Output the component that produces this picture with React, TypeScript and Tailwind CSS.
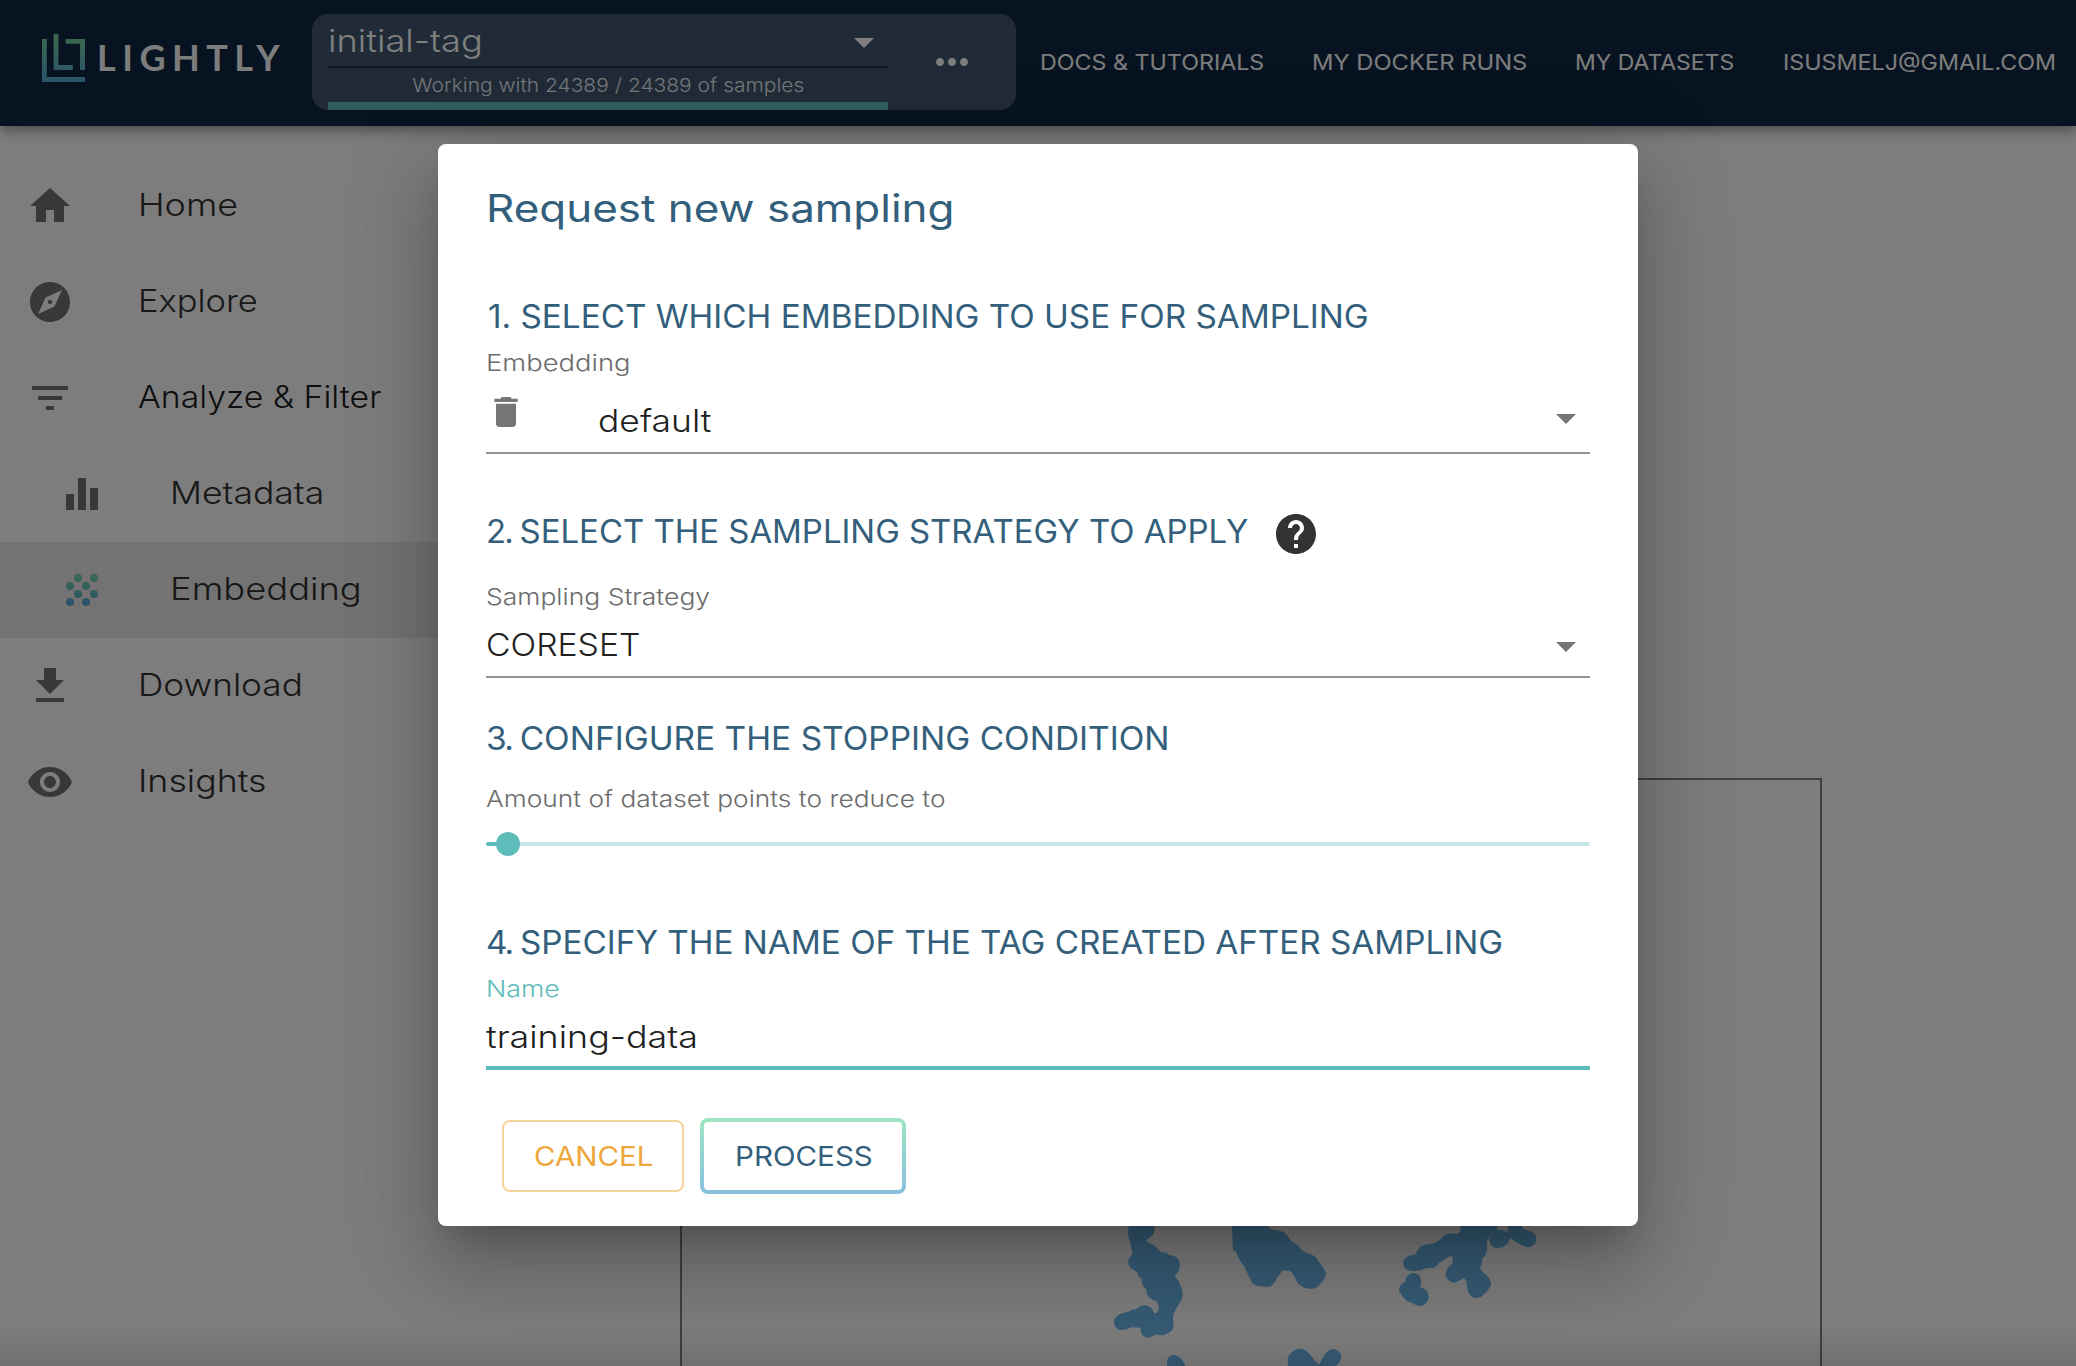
import React from 'react';
import {
  MdHome,
  MdExplore,
  MdFilterList,
  MdEqualizer,
  MdGetApp,
  MdVisibility,
  MdDelete,
  MdHelp,
  MdArrowDropDown,
  MdMoreHoriz,
} from 'react-icons/md';

function Logo() {
  return (
    <div className="flex h-[126px] w-[270px] shrink-0 items-start pl-[42px]">
      <svg width="43" height="48" viewBox="0 0 43 48" className="mt-[34px] shrink-0">
        <defs>
          <linearGradient id="logo" x1="0" y1="0" x2="0" y2="48" gradientUnits="userSpaceOnUse">
            <stop offset="0.1" stopColor="#74cf9c" />
            <stop offset="1" stopColor="#54a8d4" />
          </linearGradient>
        </defs>
        <g fill="url(#logo)">
          <path d="M0 5h4.8v38H43v5H0z" />
          <path d="M11.6 0h4.9v31h14.4v5H11.6z" />
          <path d="M23.6 5H43v31h-5V9.8H23.6z" />
        </g>
      </svg>
      <span className="ml-[12px] mt-[33px] font-['Lato',sans-serif] text-[36px] font-bold leading-[48px] tracking-[6.5px] text-[#f8f8f8]">
        LIGHTLY
      </span>
    </div>
  );
}

function Header() {
  return (
    <header className="relative z-10 flex h-[126px] items-start bg-[#0e2640] text-white shadow-[0_4px_8px_-2px_rgba(0,0,0,0.2),0_8px_10px_0_rgba(0,0,0,0.14),0_2px_20px_0_rgba(0,0,0,0.12)]">
      <Logo />
      <div className="ml-[42px] mt-[14px] flex h-[96px] w-[704px] shrink-0 items-start overflow-hidden rounded-[16px] bg-[#40566e] pl-4">
        <div className="flex w-[560px] flex-col">
          <div className="flex h-[54px] items-start justify-between border-b-2 border-[#26323f]">
            <span className="mt-[2px] inline-block origin-left scale-x-[1.167] text-[31px] font-light leading-[50px]">initial-tag</span>
            <MdArrowDropDown className="mt-1 size-12" />
          </div>
          <div className="flex h-[34px] items-center justify-center whitespace-nowrap text-[#e6eaee]">
            <span className="inline-block scale-x-[1.087] text-[19.3px] font-light">Working with 24389 / 24389 of samples</span>
          </div>
          <div className="h-2 bg-[#5ebdb8]" />
        </div>
        <MdMoreHoriz className="ml-10 mt-6 size-12" />
      </div>
      <nav className="ml-6 mt-[46px] flex whitespace-nowrap text-[22px] font-normal leading-8 text-[#fafafa]">
        <a className="w-[272px]"><span className="inline-block origin-left scale-x-[1.057]">DOCS &amp; TUTORIALS</span></a>
        <a className="w-[263px]"><span className="inline-block origin-left scale-x-[1.08]">MY DOCKER RUNS</span></a>
        <a className="w-[208px]"><span className="inline-block origin-left scale-x-[1.043]">MY DATASETS</span></a>
        <a><span className="inline-block origin-left scale-x-[1.059]">ISUSMELJ@GMAIL.COM</span></a>
      </nav>
    </header>
  );
}

function GrainIcon() {
  const dots = [[10, 6], [18, 6], [6, 10], [14, 10], [10, 14], [18, 14], [6, 18], [14, 18]];
  return (
    <svg viewBox="0 0 24 24" className="size-12">
      <defs>
        <linearGradient id="grain" x1="0" y1="4" x2="0" y2="20" gradientUnits="userSpaceOnUse">
          <stop offset="0.1" stopColor="#74cfa0" />
          <stop offset="0.9" stopColor="#54a8d4" />
        </linearGradient>
      </defs>
      <g fill="url(#grain)">
        {dots.map(([x, y]) => (
          <circle key={`${x}-${y}`} cx={x} cy={y} r="2" />
        ))}
      </g>
    </svg>
  );
}

const items = [
  { label: 'Home', icon: <MdHome className="size-12" />, scale: 'scale-x-[1.16]' },
  { label: 'Explore', icon: <MdExplore className="size-12" />, scale: 'scale-x-[1.112]' },
  { label: 'Analyze & Filter', icon: <MdFilterList className="size-12" />, scale: 'scale-x-[1.09]', strong: true },
  { label: 'Metadata', icon: <MdEqualizer className="size-12" />, scale: 'scale-x-[1.146]', nested: true },
  { label: 'Embedding', icon: <GrainIcon />, scale: 'scale-x-[1.172]', nested: true, active: true },
  { label: 'Download', icon: <MdGetApp className="size-12" />, scale: 'scale-x-[1.135]' },
  { label: 'Insights', icon: <MdVisibility className="size-12" />, scale: 'scale-x-[1.152]' },
];

function Sidebar() {
  return (
    <aside className="w-[480px] shrink-0 pt-8">
      {items.map((it) => (
        <div
          key={it.label}
          className={`flex h-24 items-center ${it.nested ? 'pl-[58px]' : 'pl-[26px]'} ${it.active ? 'bg-[#e6e6e6]' : ''}`}
        >
          <span className="text-[#717171]">{it.icon}</span>
          <span
            className={`ml-16 inline-block origin-left whitespace-nowrap pb-px text-[31px] font-light ${it.scale} ${it.strong ? 'text-[#1c1c1c]' : 'text-[#303030]'}`}
          >
            {it.label}
          </span>
        </div>
      ))}
    </aside>
  );
}

function Plot() {
  return (
    <main className="flex-1 pl-[200px] pt-[652px]">
      <div className="relative h-[700px] w-[1142px] border-2 border-[#808080]">
        <svg
          width="560"
          height="186"
          viewBox="0 0 1568 558"
          preserveAspectRatio="none"
          className="absolute left-[378px] top-[400px]"
          fill="#6cb6ea"
        >
          <path d="M200 120C188 140 188 165 195 180L203 222Q190 232 191 250Q194 266 216 276Q217 290 229 296Q228 318 242 328Q240 356 270 363Q278 375 276 386Q273 402 264 400Q258 378 236 375Q222 378 214 387Q200 388 190 396Q151 402 151 428Q154 450 174 450Q190 448 200 442L225 443Q226 472 248 473Q262 470 268 463Q290 470 302 460Q320 450 318 432Q314 420 319 400Q330 376 341 358Q347 338 338 318Q332 300 321 288Q336 276 336 252Q334 228 306 225Q296 214 282 216Q264 192 244 186Q242 180 246 177Q266 166 265 145L262 120Z" />
          <path d="M481 120L484 208Q487 214 494 217Q500 242 518 262Q526 286 537 306Q544 318 560 319Q576 322 590 319Q600 312 606 296Q618 282 623 271L645 273Q656 284 662 304Q674 325 702 327Q722 326 728 312Q742 298 745 280Q738 262 726 247Q718 226 692 219Q680 212 672 206Q664 192 648 184Q638 168 627 157Q612 148 596 149Q580 142 576 120Z" />
          <path d="M1121 130L1121 156L1110 163Q1090 154 1074 168Q1064 184 1040 192Q1006 190 994 224Q964 226 960 250Q964 272 984 273Q1002 274 1012 271Q1020 263 1044 264Q1056 260 1060 250Q1080 234 1096 227Q1103 236 1098 251Q1080 264 1080 286Q1084 306 1104 308Q1122 302 1130 294Q1139 296 1140 322Q1144 352 1164 354Q1178 354 1184 346Q1204 328 1207 312Q1204 290 1186 278Q1178 270 1176 264Q1184 250 1182 236Q1195 226 1196 208Q1194 180 1200 176Q1206 160 1222 152L1228 130Z" />
          <path d="M1256 125L1252 156Q1238 148 1226 150Q1202 160 1201 180Q1206 204 1228 205Q1254 202 1260 174Q1280 190 1288 192Q1300 202 1314 202Q1334 196 1334 174Q1330 152 1304 150Q1292 146 1292 125Z" />
          <path d="M990 278Q968 282 966 305Q948 316 949 332Q956 348 970 362Q980 368 988 369Q996 378 1010 378Q1030 374 1033 350Q1030 326 1008 322Q1014 306 1010 294Q1004 280 990 278Z" />
          <path d="M300 558V540Q306 525 322 525Q342 532 351 558Z" />
          <path d="M638 558V532Q650 506 674 506Q694 510 700 524Q710 534 712 542Q722 544 723 556Q730 548 734 536Q748 506 768 507Q788 514 788 534Q782 552 771 558Z" />
        </svg>
      </div>
    </main>
  );
}

function Caret({ className }: { className: string }) {
  return <MdArrowDropDown className={`ml-auto size-12 text-[#757575] ${className}`} />;
}

function Dialog() {
  return (
    <div className="flex h-[1082px] w-[1200px] flex-col rounded-lg bg-white px-12 pb-8 pt-8 text-[#212121] shadow-[0_22px_30px_-14px_rgba(0,0,0,0.2),0_48px_76px_6px_rgba(0,0,0,0.14),0_18px_92px_16px_rgba(0,0,0,0.12)]">
      <h1 className="h-16 text-[38.5px] font-normal leading-[64px] text-[#335f7c]">
        <span className="inline-block origin-left scale-x-[1.142]">Request new sampling</span>
      </h1>

      <h2 className="mt-[53px] h-12 whitespace-nowrap pl-[2px] text-[32px] font-normal leading-[48px] text-[#335f7c]">
        <span className="inline-block origin-left scale-x-[1.04]">1. SELECT WHICH EMBEDDING TO USE FOR SAMPLING</span>
      </h2>
      <label className="mt-[6px] h-8 text-[23.2px] font-light leading-8 text-[#6c6c6c]">
        <span className="inline-block origin-left scale-x-[1.181]">Embedding</span>
      </label>
      <div className="-mt-px flex h-[76px] items-start border-b-2 border-[#949494]">
        <MdDelete className="mt-[14px] size-10 text-[#757575]" />
        <span className="ml-[72px] mt-[23px] inline-block origin-left scale-x-[1.144] text-[31px] font-light leading-10">default</span>
        <Caret className="mt-4" />
      </div>

      <div className="mt-14 flex h-12 items-center">
        <h2 className="w-[786px] whitespace-nowrap pb-[5px] text-[32px] font-normal leading-[43px] text-[#335f7c]">
          <span className="inline-block origin-left scale-x-[1.029]">
            <span className="tracking-[-1.7px]">2. </span>SELECT THE SAMPLING STRATEGY TO APPLY
          </span>
        </h2>
        <MdHelp className="size-12 text-[#333333]" />
      </div>
      <label className="mt-[23px] h-8 text-[23.2px] font-light leading-8 text-[#6c6c6c]">
        <span className="inline-block origin-left scale-x-[1.142]">Sampling Strategy</span>
      </label>
      <div className="flex h-[65px] items-start border-b-2 border-[#949494]">
        <span className="mt-3 inline-block origin-left scale-x-[1.088] text-[31px] font-light leading-10">CORESET</span>
        <Caret className="mt-[9px]" />
      </div>

      <h2 className="mt-[37px] h-12 whitespace-nowrap text-[32px] font-normal leading-[48px] text-[#335f7c]">
        <span className="inline-block origin-left scale-x-[1.046]">
          <span className="tracking-[-1.7px]">3. </span>CONFIGURE THE STOPPING CONDITION
        </span>
      </h2>
      <label className="mt-5 h-8 text-[23.2px] font-light leading-8 text-[#6c6c6c]">
        <span className="inline-block origin-left scale-x-[1.134]">Amount of dataset points to reduce to</span>
      </label>
      <div className="mt-[17px] flex h-6 items-center">
        <div className="h-1 w-[10px] rounded-l-sm bg-[#5ebdba]" />
        <div className="size-6 rounded-full bg-[#5ebdba]" />
        <div className="h-1 flex-1 rounded-r-sm bg-[#c2e7e5]" />
      </div>

      <h2 className="mt-[63px] h-12 whitespace-nowrap text-[32px] font-normal leading-[48px] text-[#335f7c]">
        <span className="inline-block origin-left scale-x-[1.039]">
          <span className="tracking-[-1.7px]">4. </span>SPECIFY THE NAME OF THE TAG CREATED AFTER SAMPLING
        </span>
      </h2>
      <label className="mt-[6px] h-8 text-[23.2px] font-light leading-8 text-[#5ebdba]">
        <span className="inline-block origin-left scale-x-[1.153]">Name</span>
      </label>
      <div className="flex h-[65px] items-start border-b-4 border-[#5ebdba]">
        <span className="mt-3 inline-block origin-left scale-x-[1.156] text-[31px] font-light leading-10">training-data</span>
      </div>

      <div className="mt-12 flex items-center gap-4 pl-4 text-[27px] font-normal">
        <button className="h-[72px] w-[182px] rounded-lg border-2 border-[#f6d39c] pl-px pt-[2px] text-[#eea73c]">
          <span className="inline-block scale-x-[1.092]">CANCEL</span>
        </button>
        <div className="h-[76px] w-[206px] rounded-lg bg-linear-to-b from-[#9fe4c1] to-[#88c0df] p-1">
          <button className="size-full rounded bg-white pl-px pt-[2px] text-[#335f7c]">
            <span className="inline-block scale-x-[1.094]">PROCESS</span>
          </button>
        </div>
      </div>
    </div>
  );
}

export default function App() {
  return (
    <div className="relative h-[1366px] w-[2076px] overflow-hidden bg-[#fafafa] font-['Inter',sans-serif]">
      <Header />
      <div className="flex">
        <Sidebar />
        <Plot />
      </div>
      <div className="absolute inset-x-0 bottom-0 h-9 bg-linear-to-b from-transparent to-black/10" />
      <div className="absolute inset-0 z-20 flex items-start justify-center bg-black/50 pt-36">
        <Dialog />
      </div>
    </div>
  );
}
